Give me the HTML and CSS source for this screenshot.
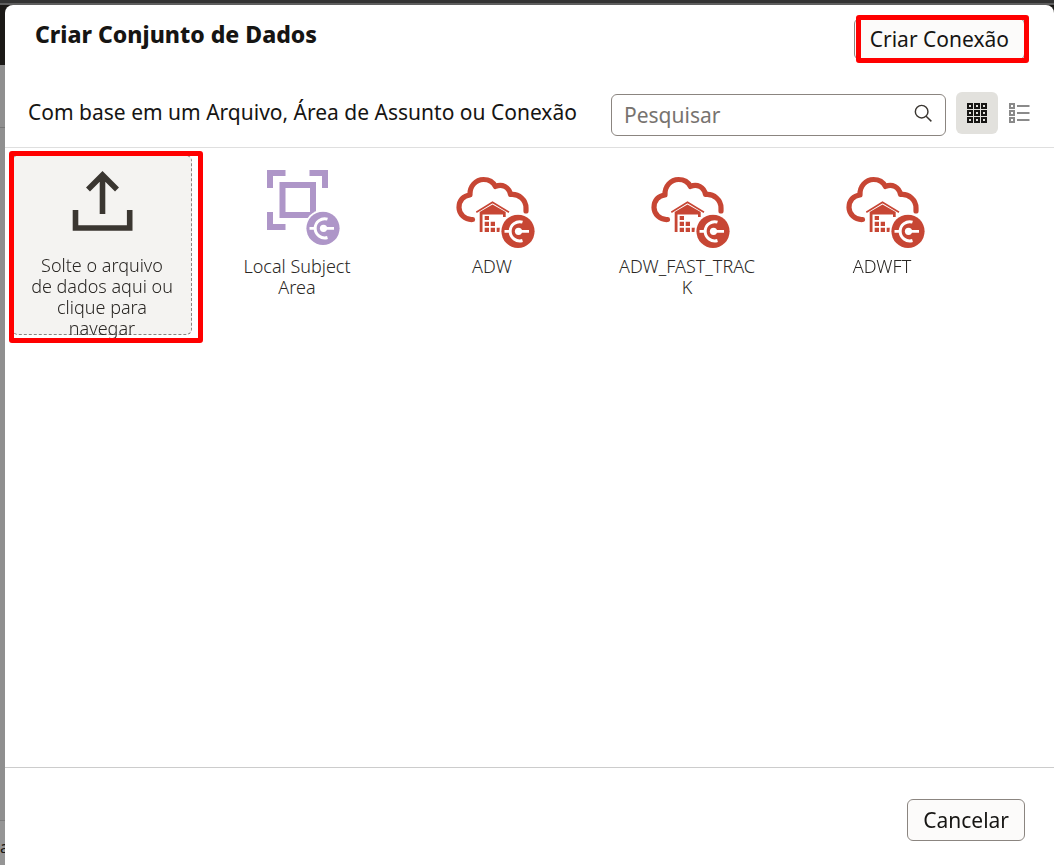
FILE: index.html
```html
<!DOCTYPE html>
<html lang="pt-BR">
<head>
<meta charset="utf-8">
<title>Criar Conjunto de Dados</title>
<link rel="stylesheet" href="styles.css">
</head>
<body>
<svg class="symbols" aria-hidden="true">
  <symbol id="plug" viewBox="0 0 34 34">
    <circle cx="17" cy="17" r="16.600" fill="currentColor"/>
    <path d="M21.500 7.800A9.600 9.600 0 1 0 21.500 26.200" fill="none" stroke="#fff" stroke-width="3"/>
    <path d="M3.500 17H9M17 17H28" stroke="#fff" stroke-width="2.800"/>
    <circle cx="17.500" cy="17" r="3.600" fill="#fff"/>
  </symbol>
  <symbol id="warehouse" viewBox="0 0 90 90">
    <path d="M20.500 53.500C13 54 7 48 7 41.500C7 34.500 11.500 29.500 18 29C17.500 20 24 13.500 31.500 13.500C37 13.500 41.500 16.500 43.500 20.500C50 17.500 57 21 58.500 28.500C67 27.500 74 34 74 42V45" fill="none" stroke="currentColor" stroke-width="5.200" stroke-linecap="round" stroke-linejoin="round"/>
    <path d="M24.300 46.200L40.500 36.200L57 46.200" fill="none" stroke="currentColor" stroke-width="1.700"/>
    <path d="M27.700 46L40.500 38.500L53.700 46V51H51V48.500H30.500V66H27.700ZM32.700 50H37V54H32.700ZM32.700 55.800H37V60.100H32.700ZM38.700 55.800H43V60.100H38.700ZM32.700 61.700H37V66H32.700ZM38.700 61.700H43V66H38.700ZM44.700 61.700H49V66H44.700Z" fill="currentColor"/>
    <circle cx="66" cy="65.300" r="18.500" fill="#fff"/>
    <use href="#plug" x="49" y="48.300" width="34" height="34"/>
  </symbol>
</svg>
<div class="page-behind" aria-hidden="true">
  <div class="behind-top"></div>
  <div class="behind-toolbar"></div>
  <div class="behind-body"></div>
  <div class="behind-footer">a</div>
</div>
<main class="dialog">
  <header class="title-bar">
    <h1 class="title">Criar Conjunto de Dados</h1>
    <span class="marked marked-action"><button class="button button-create" type="button">Criar Conexão</button></span>
  </header>
  <div class="toolbar">
    <h2 class="subtitle">Com base em um Arquivo, Área de Assunto ou Conexão</h2>
    <div class="tools">
      <label class="search">
        <input class="search-input" type="search" placeholder="Pesquisar" aria-label="Pesquisar">
        <svg class="search-icon" viewBox="0 0 20 20" aria-hidden="true"><circle cx="8.500" cy="8.500" r="7"/><path d="M13.500 13.500L19.300 19.300"/></svg>
      </label>
      <button class="view-button view-button-active" type="button" aria-label="Grade">
        <svg class="view-icon" viewBox="0 0 20 20" aria-hidden="true"><path d="M1 1h4v4h-4zM8 1h4v4h-4zM15 1h4v4h-4zM1 8h4v4h-4zM8 8h4v4h-4zM15 8h4v4h-4zM1 15h4v4h-4zM8 15h4v4h-4zM15 15h4v4h-4z"/></svg>
      </button>
      <button class="view-button" type="button" aria-label="Lista">
        <svg class="view-icon" viewBox="0 0 20 20" aria-hidden="true"><path d="M1 1h4v4h-4zM1 8h4v4h-4zM1 15h4v4h-4zM8 3H20.500M8 10H20.500M8 17H20.500"/></svg>
      </button>
    </div>
  </div>
  <section class="sources">
    <span class="marked marked-tile">
      <button class="tile tile-upload" type="button">
        <svg class="tile-icon" viewBox="0 0 80 80" aria-hidden="true"><path d="M13.500 44V62H67.700V44M40.500 8V48M26 23.500L40.500 9L55 23.500" fill="none" stroke="#3a3631" stroke-width="5.600"/></svg>
        <span class="tile-label">Solte o arquivo de dados aqui ou clique para navegar</span>
      </button>
    </span>
    <button class="tile" type="button">
      <svg class="tile-icon icon-subject" viewBox="0 0 80 80" aria-hidden="true">
        <path d="M13 22V7H28.500M52.500 7H68V22M13 46V61H28.500M25.500 19H56V49H25.500Z" fill="none" stroke="currentColor" stroke-width="6"/>
        <circle cx="66" cy="62.300" r="18.500" fill="#fff"/>
        <use href="#plug" x="49" y="45.300" width="34" height="34"/>
      </svg>
      <span class="tile-label">Local Subject Area</span>
    </button>
    <button class="tile" type="button">
      <svg class="tile-icon icon-warehouse" viewBox="0 0 80 80" aria-hidden="true"><use href="#warehouse" width="90" height="90"/></svg>
      <span class="tile-label">ADW</span>
    </button>
    <button class="tile" type="button">
      <svg class="tile-icon icon-warehouse" viewBox="0 0 80 80" aria-hidden="true"><use href="#warehouse" width="90" height="90"/></svg>
      <span class="tile-label">ADW_FAST_TRACK</span>
    </button>
    <button class="tile" type="button">
      <svg class="tile-icon icon-warehouse" viewBox="0 0 80 80" aria-hidden="true"><use href="#warehouse" width="90" height="90"/></svg>
      <span class="tile-label">ADWFT</span>
    </button>
  </section>
  <footer class="actions">
    <button class="button" type="button">Cancelar</button>
  </footer>
</main>
</body>
</html>
```

FILE: styles.css
```css
* { box-sizing: border-box; }

body {
  margin: 0;
  padding: 5px 0 0 5px;
  min-height: 100vh;
  display: flex;
  font-family: "Noto Sans", sans-serif;
  color: #161513;
}

button, input { font-family: inherit; color: inherit; }

.symbols { position: absolute; width: 0; height: 0; }

/* Dimmed page under the dialog */
.page-behind {
  position: fixed;
  inset: 0;
  z-index: -1;
  display: flex;
  flex-direction: column;
  overflow: hidden;
  background: #8f8f8f;
}
.behind-top {
  height: 65px;
  background: #1b1916;
  border-top: 3px solid #333;
  box-shadow: inset 0 2px #5e5e5e;
}
.behind-toolbar { height: 63px; border-bottom: 1px solid #777; }
.behind-body { flex: 1; }
.behind-footer {
  height: 45px;
  padding-top: 16px;
  border-top: 1px solid #7d7d7d;
  background: #959595;
  font-size: 16px;
  line-height: 20px;
}

.dialog {
  flex: 1;
  display: flex;
  flex-direction: column;
  min-width: 0;
  background: #fff;
  border-radius: 8px 8px 0 0;
}

.title-bar {
  display: flex;
  align-items: flex-start;
  justify-content: space-between;
  padding: 13px 29px 0 30px;
}
.title { margin: 0; font-size: 23px; line-height: 32px; font-weight: 800; }

.button {
  height: 42px;
  padding: 0 15px;
  border: 1px solid #8b8580;
  border-radius: 6px;
  background: #fcfbfa;
  font-size: 21px;
  line-height: 28px;
}

/* Red frames drawn over the highlighted controls */
.marked { position: relative; display: block; }
.marked::after {
  content: "";
  position: absolute;
  border: 5px solid #f00;
  border-radius: 3px;
  pointer-events: none;
}
.marked-action::after { inset: -3px -4px -3px 2px; }
.marked-tile::after { inset: -4px -11px -8px -3px; }

.toolbar {
  display: flex;
  align-items: center;
  justify-content: space-between;
  gap: 16px;
  padding: 30px 14px 11px 23px;
  border-bottom: 1px solid #dfdfdf;
}
.subtitle { margin: 0 0 2px; font-size: 21px; line-height: 28px; font-weight: 400; }
.tools { display: flex; align-items: center; }

.search {
  display: flex;
  align-items: center;
  width: 335px;
  height: 42px;
  margin: 4px 10px 0 0;
  padding: 0 13px 4px 12px;
  border: 1px solid #8b8580;
  border-radius: 6px;
}
.search-input {
  flex: 1;
  min-width: 0;
  padding: 4px 0 0;
  border: 0;
  outline: 0;
  background: none;
  font-size: 21px;
  line-height: 28px;
}
.search-input::placeholder { color: #77736f; opacity: 1; }
.search-icon { width: 18px; height: 18px; fill: none; stroke: #3a3631; stroke-width: 1.600; }

.view-button {
  display: grid;
  place-items: center;
  width: 42px;
  height: 42px;
  padding: 0;
  border: 0;
  border-radius: 6px;
  background: none;
  color: #8a8a8a;
}
.view-button-active { background: #e2e1dd; color: #161513; }
.view-icon { width: 20px; height: 20px; fill: none; stroke: currentColor; stroke-width: 2; overflow: visible; }

.sources {
  flex: 1;
  display: flex;
  flex-wrap: wrap;
  align-content: flex-start;
  gap: 15px;
  padding: 7px;
}
.tile {
  display: flex;
  flex-direction: column;
  align-items: center;
  gap: 10px;
  width: 180px;
  height: 180px;
  padding: 10px 17px;
  border: 1px solid transparent;
  border-radius: 6px;
  background: none;
  color: #2a2724;
}
.tile-upload { gap: 9px; border: 1px dashed #8b8580; background: #f4f3f1; }
.tile-icon { flex: none; width: 80px; height: 80px; overflow: visible; }
.icon-subject { color: #ae96c8; }
.icon-warehouse { color: #c74634; }
.tile-label {
  width: 100%;
  font-size: 18px;
  line-height: 21px;
  font-weight: 300;
  overflow-wrap: anywhere;
}

.actions {
  display: flex;
  justify-content: flex-end;
  padding: 31px 29px 24px;
  border-top: 1px solid #ccc;
}
```
